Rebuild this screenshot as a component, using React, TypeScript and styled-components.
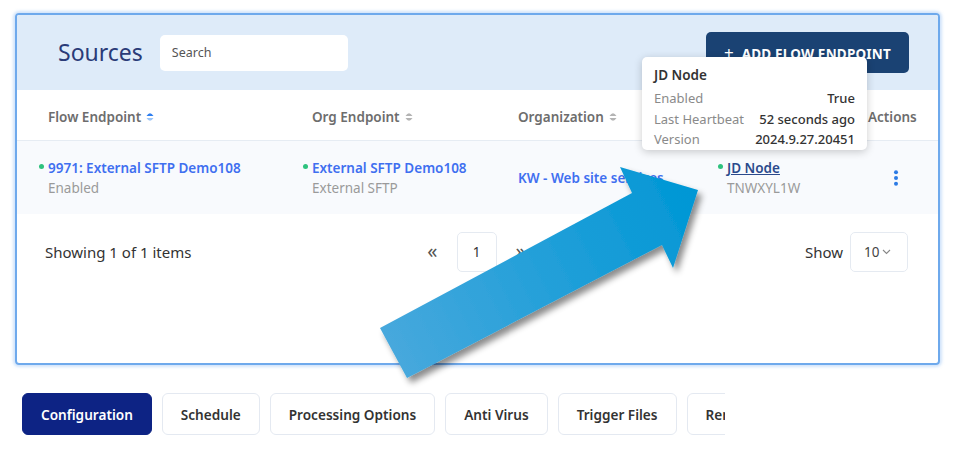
import styled, { createGlobalStyle } from 'styled-components';

const GlobalStyle = createGlobalStyle`
  body {
    margin: 0;
    background: #ffffff;
    font-family: 'Noto Sans', 'Open Sans', Arial, sans-serif;
    color: #333;
  }
`;

interface Endpoint {
  id: string;
  title: string;
  status: string;
  orgTitle: string;
  orgType: string;
  organization: string;
  node: string;
  nodeCode: string;
}

const rows: Endpoint[] = [
  {
    id: '9971',
    title: '9971: External SFTP Demo108',
    status: 'Enabled',
    orgTitle: 'External SFTP Demo108',
    orgType: 'External SFTP',
    organization: 'KW - Web site services',
    node: 'JD Node',
    nodeCode: 'TNWXYL1W',
  },
];

const tabs = [
  'Configuration',
  'Schedule',
  'Processing Options',
  'Anti Virus',
  'Trigger Files',
  'Remote Settings',
];

function SortIcon({ active }: { active?: boolean }) {
  return (
    <svg width='8' height='12' viewBox='0 0 8 12'>
      <path d='M0.5 5 Q4 -0.5 7.5 5 Z' fill={active ? '#2f7ff0' : '#b4b4b4'} />
      <path d='M0.5 7 Q4 12.5 7.5 7 Z' fill={active ? '#9cc5f7' : '#b4b4b4'} />
    </svg>
  );
}

function KebabIcon() {
  return (
    <svg width='6' height='16' viewBox='0 0 6 16'>
      <circle cx='3' cy='2.2' r='2' fill='#2c7be5' />
      <circle cx='3' cy='8' r='2' fill='#2c7be5' />
      <circle cx='3' cy='13.8' r='2' fill='#2c7be5' />
    </svg>
  );
}

export default function App() {
  return (
    <Page>
      <GlobalStyle />
      <Panel>
        <Header>
          <Title>Sources</Title>
          <SearchBox placeholder='Search' />
          <AddButton>
            <span>+</span> ADD FLOW ENDPOINT
          </AddButton>
        </Header>

        <HeadRow>
          <HeadCell>
            Flow Endpoint <SortIcon active />
          </HeadCell>
          <HeadCell>
            Org Endpoint <SortIcon />
          </HeadCell>
          <HeadCell>
            Organization <SortIcon />
          </HeadCell>
          <HeadCell />
          <HeadCell>Actions</HeadCell>
        </HeadRow>

        {rows.map((r) => (
          <DataRow key={r.id}>
            <Cell>
              <Primary>
                <Dot />
                {r.title}
              </Primary>
              <Secondary>{r.status}</Secondary>
            </Cell>
            <Cell>
              <Primary>
                <Dot />
                {r.orgTitle}
              </Primary>
              <Secondary>{r.orgType}</Secondary>
            </Cell>
            <Cell>
              <Primary>{r.organization}</Primary>
            </Cell>
            <Cell>
              <Primary underline>
                <Dot />
                {r.node}
              </Primary>
              <Secondary>{r.nodeCode}</Secondary>
            </Cell>
            <ActionCell>
              <KebabIcon />
            </ActionCell>
          </DataRow>
        ))}

        <Footer>
          <Showing>Showing 1 of 1 items</Showing>
          <Pager>
            <PageArrow>«</PageArrow>
            <PageBox>1</PageBox>
            <PageArrow>»</PageArrow>
          </Pager>
          <ShowGroup>
            Show
            <SelectBox>
              10
              <svg width='9' height='6' viewBox='0 0 9 6'>
                <path d='M1 1 L4.5 4.5 L8 1' fill='none' stroke='#888' strokeWidth='1.1' />
              </svg>
            </SelectBox>
          </ShowGroup>
        </Footer>
      </Panel>

      <TabBar>
        {tabs.map((t, i) => (
          <Tab key={t} active={i === 0}>
            {t}
          </Tab>
        ))}
      </TabBar>

      <Tooltip>
        <TipTitle>JD Node</TipTitle>
        <TipGrid>
          <TipLabel>Enabled</TipLabel>
          <TipValue>True</TipValue>
          <TipLabel>Last Heartbeat</TipLabel>
          <TipValue>52 seconds ago</TipValue>
          <TipLabel>Version</TipLabel>
          <TipValue>2024.9.27.20451</TipValue>
        </TipGrid>
      </Tooltip>

      <ArrowLayer width='955' height='456' viewBox='0 0 955 456'>
        <defs>
          <linearGradient id='arrowFill' x1='380' y1='360' x2='698' y2='200' gradientUnits='userSpaceOnUse'>
            <stop offset='0' stopColor='#4aa9dd' />
            <stop offset='1' stopColor='#0097d5' />
          </linearGradient>
          <filter id='arrowShadow' x='-20%' y='-20%' width='140%' height='140%'>
            <feDropShadow dx='4' dy='5' stdDeviation='3' floodColor='#000' floodOpacity='0.45' />
          </filter>
        </defs>
        <polygon
          points='380,328 632,193 620,167 698,190 673,268 662,245 407,378'
          fill='url(#arrowFill)'
          filter='url(#arrowShadow)'
        />
      </ArrowLayer>
    </Page>
  );
}

const Page = styled.div`
  position: relative;
  width: 955px;
  height: 456px;
  overflow: hidden;
  padding: 13px 0 0 15px;
  box-sizing: border-box;
`;

const Panel = styled.div`
  width: 925px;
  height: 352px;
  box-sizing: border-box;
  border: 2px solid #6ea9ec;
  border-radius: 4px;
  box-shadow: 0 0 3px 2px rgba(120, 175, 240, 0.35);
  overflow: hidden;
`;

const Header = styled.div`
  display: flex;
  align-items: center;
  height: 75px;
  background: #deebf9;
  padding-left: 41px;
  padding-right: 29px;
`;

const Title = styled.h1`
  margin: 0 17px 0 0;
  font-size: 23px;
  font-weight: 400;
  color: #2a3b78;
  line-height: 1;
`;

const SearchBox = styled.input`
  width: 188px;
  height: 36px;
  box-sizing: border-box;
  border: none;
  border-radius: 5px;
  background: #fff;
  padding: 0 12px;
  font-family: inherit;
  font-size: 12.5px;
  outline: none;
  &::placeholder {
    color: #555;
  }
`;

const AddButton = styled.button`
  margin-left: auto;
  width: 203px;
  height: 41px;
  border: none;
  border-radius: 5px;
  background: #1a4273;
  color: #fff;
  font-family: inherit;
  font-size: 13.5px;
  font-weight: 700;
  letter-spacing: 0.2px;
  span {
    font-size: 17px;
    font-weight: 400;
    margin-right: 4px;
  }
`;

const HeadRow = styled.div`
  display: grid;
  grid-template-columns: 264px 206px 209px 141px 1fr;
  align-items: center;
  height: 50px;
  padding-left: 31px;
  border-bottom: 1px solid #e6ecf3;
`;

const HeadCell = styled.div`
  display: flex;
  align-items: center;
  gap: 5px;
  margin-top: 3px;
  font-size: 13.5px;
  font-weight: 600;
  color: #6d6d6d;
`;

const DataRow = styled(HeadRow)`
  height: 73px;
  background: #f8fafd;
  border-bottom: none;
`;

const Cell = styled.div`
  display: flex;
  flex-direction: column;
  justify-content: center;
`;

const Primary = styled.div<{ underline?: boolean }>`
  display: flex;
  align-items: center;
  line-height: 20px;
  font-size: 13.5px;
  font-weight: 600;
  white-space: nowrap;
  color: ${(p) => (p.underline ? '#2b4a8c' : '#3f6ff0')};
  text-decoration: ${(p) => (p.underline ? 'underline' : 'none')};
`;

const Dot = styled.span`
  width: 5px;
  height: 5px;
  border-radius: 50%;
  background: #2ec27e;
  margin-left: -9px;
  margin-right: 4px;
  margin-top: -3px;
  flex: none;
`;

const Secondary = styled.div`
  line-height: 20px;
  font-size: 13.5px;
  color: #9a9a9a;
`;

const ActionCell = styled.div`
  padding-left: 25px;
  display: flex;
  align-items: center;
`;

const Footer = styled.div`
  display: grid;
  grid-template-columns: 1fr auto 1fr;
  align-items: center;
  padding: 18px 30px 0 28px;
`;

const Showing = styled.div`
  font-size: 15px;
  color: #333;
`;

const Pager = styled.div`
  display: flex;
  align-items: center;
  gap: 19px;
`;

const PageArrow = styled.span`
  font-size: 20px;
  color: #555;
  line-height: 1;
  margin-top: -3px;
`;

const PageBox = styled.div`
  width: 40px;
  height: 40px;
  box-sizing: border-box;
  border: 1px solid #e5eaf1;
  border-radius: 5px;
  display: flex;
  align-items: center;
  justify-content: center;
  font-size: 13.5px;
  color: #333;
`;

const ShowGroup = styled.div`
  justify-self: end;
  display: flex;
  align-items: center;
  gap: 7px;
  font-size: 15px;
  color: #333;
`;

const SelectBox = styled.div`
  width: 58px;
  height: 40px;
  box-sizing: border-box;
  border: 1px solid #e5eaf1;
  border-radius: 5px;
  display: flex;
  align-items: center;
  padding-left: 13px;
  gap: 3px;
  font-size: 13.5px;
  color: #444;
`;

const TabBar = styled.div`
  display: flex;
  gap: 10px;
  width: 703px;
  margin: 28px 0 0 7px;
  overflow: hidden;
`;

const Tab = styled.div<{ active?: boolean }>`
  flex: none;
  height: 42px;
  box-sizing: border-box;
  padding: 0 18px;
  display: flex;
  align-items: center;
  border-radius: 6px;
  border: 1px solid ${(p) => (p.active ? '#0d2384' : '#e4e9f1')};
  background: ${(p) => (p.active ? '#0d2384' : '#fff')};
  color: ${(p) => (p.active ? '#fff' : '#333')};
  font-size: 13.6px;
  font-weight: 600;
  white-space: nowrap;
`;

const Tooltip = styled.div`
  position: absolute;
  left: 642px;
  top: 57px;
  width: 225px;
  height: 93px;
  box-sizing: border-box;
  padding: 8px 12px 0 12px;
  background: #fff;
  border-radius: 5px;
  box-shadow: 0 2px 8px rgba(0, 0, 0, 0.2);
`;

const TipTitle = styled.div`
  font-size: 13.5px;
  font-weight: 600;
  line-height: 20px;
  color: #333;
  margin-bottom: 3px;
`;

const TipGrid = styled.div`
  display: grid;
  grid-template-columns: auto 1fr;
  column-gap: 10px;
  line-height: 20.5px;
  font-size: 13px;
`;

const TipLabel = styled.span`
  color: #8a8a8a;
`;

const TipValue = styled.span`
  color: #333;
  text-align: right;
  font-weight: 500;
`;

const ArrowLayer = styled.svg`
  position: absolute;
  left: 0;
  top: 0;
  pointer-events: none;
`;
